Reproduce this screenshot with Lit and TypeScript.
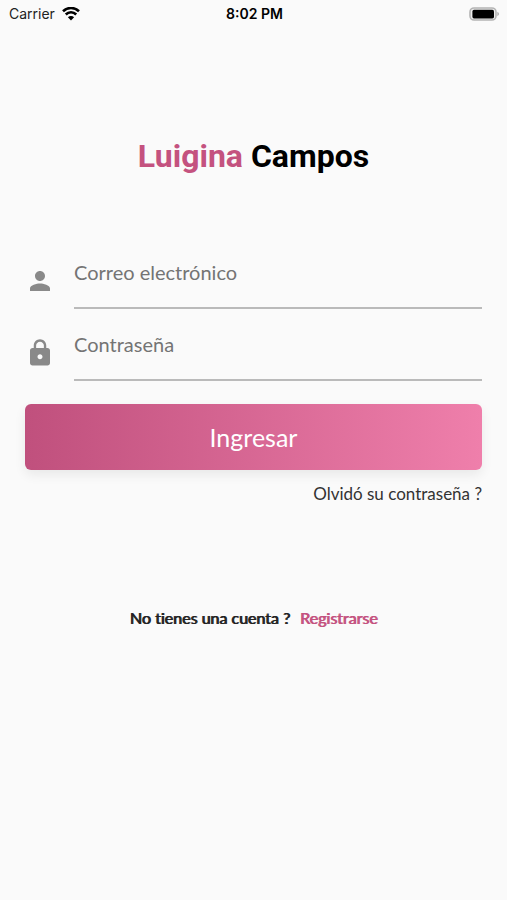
import { LitElement, html, css } from "lit";
import { customElement } from "lit/decorators.js";

@customElement("app-root")
class AppRoot extends LitElement {
  static styles = css`
    :host {
      display: block;
      min-height: 100vh;
      background: #fafafa;
      color: #000;
      font-family: Lato, "Open Sans", sans-serif;
      font-variant-ligatures: none;
    }
    * { box-sizing: border-box; }
    .status {
      display: grid;
      grid-template-columns: 1fr auto 1fr;
      align-items: center;
      height: 28px;
      padding: 0 7px 0 9px;
      font: 14px/20px Inter, sans-serif;
    }
    .carrier { display: flex; align-items: center; gap: 7px; color: #222; }
    .time { font-weight: 600; }
    .battery { justify-self: end; }
    svg { display: block; flex: none; }
    main { padding: 0 25px; }
    h1 {
      margin: 108px 0 0;
      font: 700 32px/40px Roboto, sans-serif;
      text-align: center;
    }
    .accent { color: #c4527f; }
    form { margin-top: 68px; }
    .field {
      display: grid;
      grid-template-columns: 30px 1fr;
      column-gap: 19px;
      align-items: center;
      height: 72px;
    }
    .field svg { fill: #898989; margin-top: 2px; }
    input {
      width: 100%;
      height: 58px;
      padding: 0 0 14px;
      border: 0;
      border-bottom: 2px solid #bababa;
      border-radius: 0;
      outline: 0;
      background: none;
      color: #222;
      font: 20px/24px Lato, sans-serif;
      font-variant-ligatures: none;
    }
    input::placeholder { color: #747474; opacity: 1; }
    .submit {
      display: block;
      width: 100%;
      height: 66px;
      margin-top: 16px;
      border: 0;
      border-radius: 6px;
      background: linear-gradient(90deg, #c0507d, #ef7fab);
      box-shadow: 0 5px 12px #00000012;
      color: #fff;
      font: 25px/30px Lato, sans-serif;
    }
    a { text-decoration: none; color: inherit; }
    .forgot {
      display: block;
      width: fit-content;
      margin: 13px 0 0 auto;
      color: #333;
      font-size: 17px;
      line-height: 22px;
    }
    .signup {
      display: flex;
      justify-content: center;
      gap: 10px;
      margin: 102px 0 0;
      font-size: 16px;
      line-height: 22px;
      color: #222;
      text-shadow: 1px 0 0 currentColor;
    }
    .signup a { color: #c4527f; }
  `;

  render() {
    return html`
      <header class="status">
        <span class="carrier">Carrier
          <svg width="18" height="14" viewBox="0 0 18 14" fill="none" stroke="#000" stroke-width="2.6">
            <path d="M1 4.2a11.6 11.6 0 0 1 16 0M3.8 7.5a7.3 7.3 0 0 1 10.4 0" />
            <path d="M9 13.4 5.9 10.2a4.3 4.3 0 0 1 6.2 0z" fill="#000" stroke="none" />
          </svg>
        </span>
        <span class="time">8:02 PM</span>
        <svg class="battery" width="31" height="14" viewBox="0 0 31 14">
          <rect x="1" y="1" width="26" height="12" rx="4" fill="#eee" stroke="#b4b4b4" stroke-width="1.6" />
          <rect x="3.4" y="2.8" width="21.6" height="8.6" rx="1.6" />
          <path d="M28.4 4.8q3.2 2.2 0 4.4z" fill="#aaa" />
        </svg>
      </header>
      <main>
        <h1><span class="accent">Luigina</span> Campos</h1>
        <form @submit=${(e: Event) => e.preventDefault()}>
          <div class="field">
            <svg width="30" height="30" viewBox="0 0 24 24" aria-hidden="true">
              <path d="M12 12c2.21 0 4-1.79 4-4s-1.79-4-4-4-4 1.79-4 4 1.79 4 4 4zm0 2c-2.67 0-8 1.34-8 4v2h16v-2c0-2.66-5.33-4-8-4z" />
            </svg>
            <input type="email" aria-label="Correo electrónico" placeholder="Correo electrónico" />
          </div>
          <div class="field">
            <svg width="30" height="30" viewBox="0 0 24 24" aria-hidden="true">
              <path d="M18 8h-1V6c0-2.76-2.24-5-5-5S7 3.24 7 6v2H6c-1.1 0-2 .9-2 2v10c0 1.1.9 2 2 2h12c1.1 0 2-.9 2-2V10c0-1.1-.9-2-2-2zm-6 9c-1.1 0-2-.9-2-2s.9-2 2-2 2 .9 2 2-.9 2-2 2zm3.1-9H8.9V6c0-1.71 1.39-3.1 3.1-3.1s3.1 1.39 3.1 3.1v2z" />
            </svg>
            <input type="password" aria-label="Contraseña" placeholder="Contraseña" />
          </div>
          <button class="submit" type="submit">Ingresar</button>
        </form>
        <a class="forgot" href="#recuperar">Olvidó su contraseña ?</a>
        <p class="signup"><span>No tienes una cuenta ?</span><a href="#registro">Registrarse</a></p>
      </main>
    `;
  }
}
